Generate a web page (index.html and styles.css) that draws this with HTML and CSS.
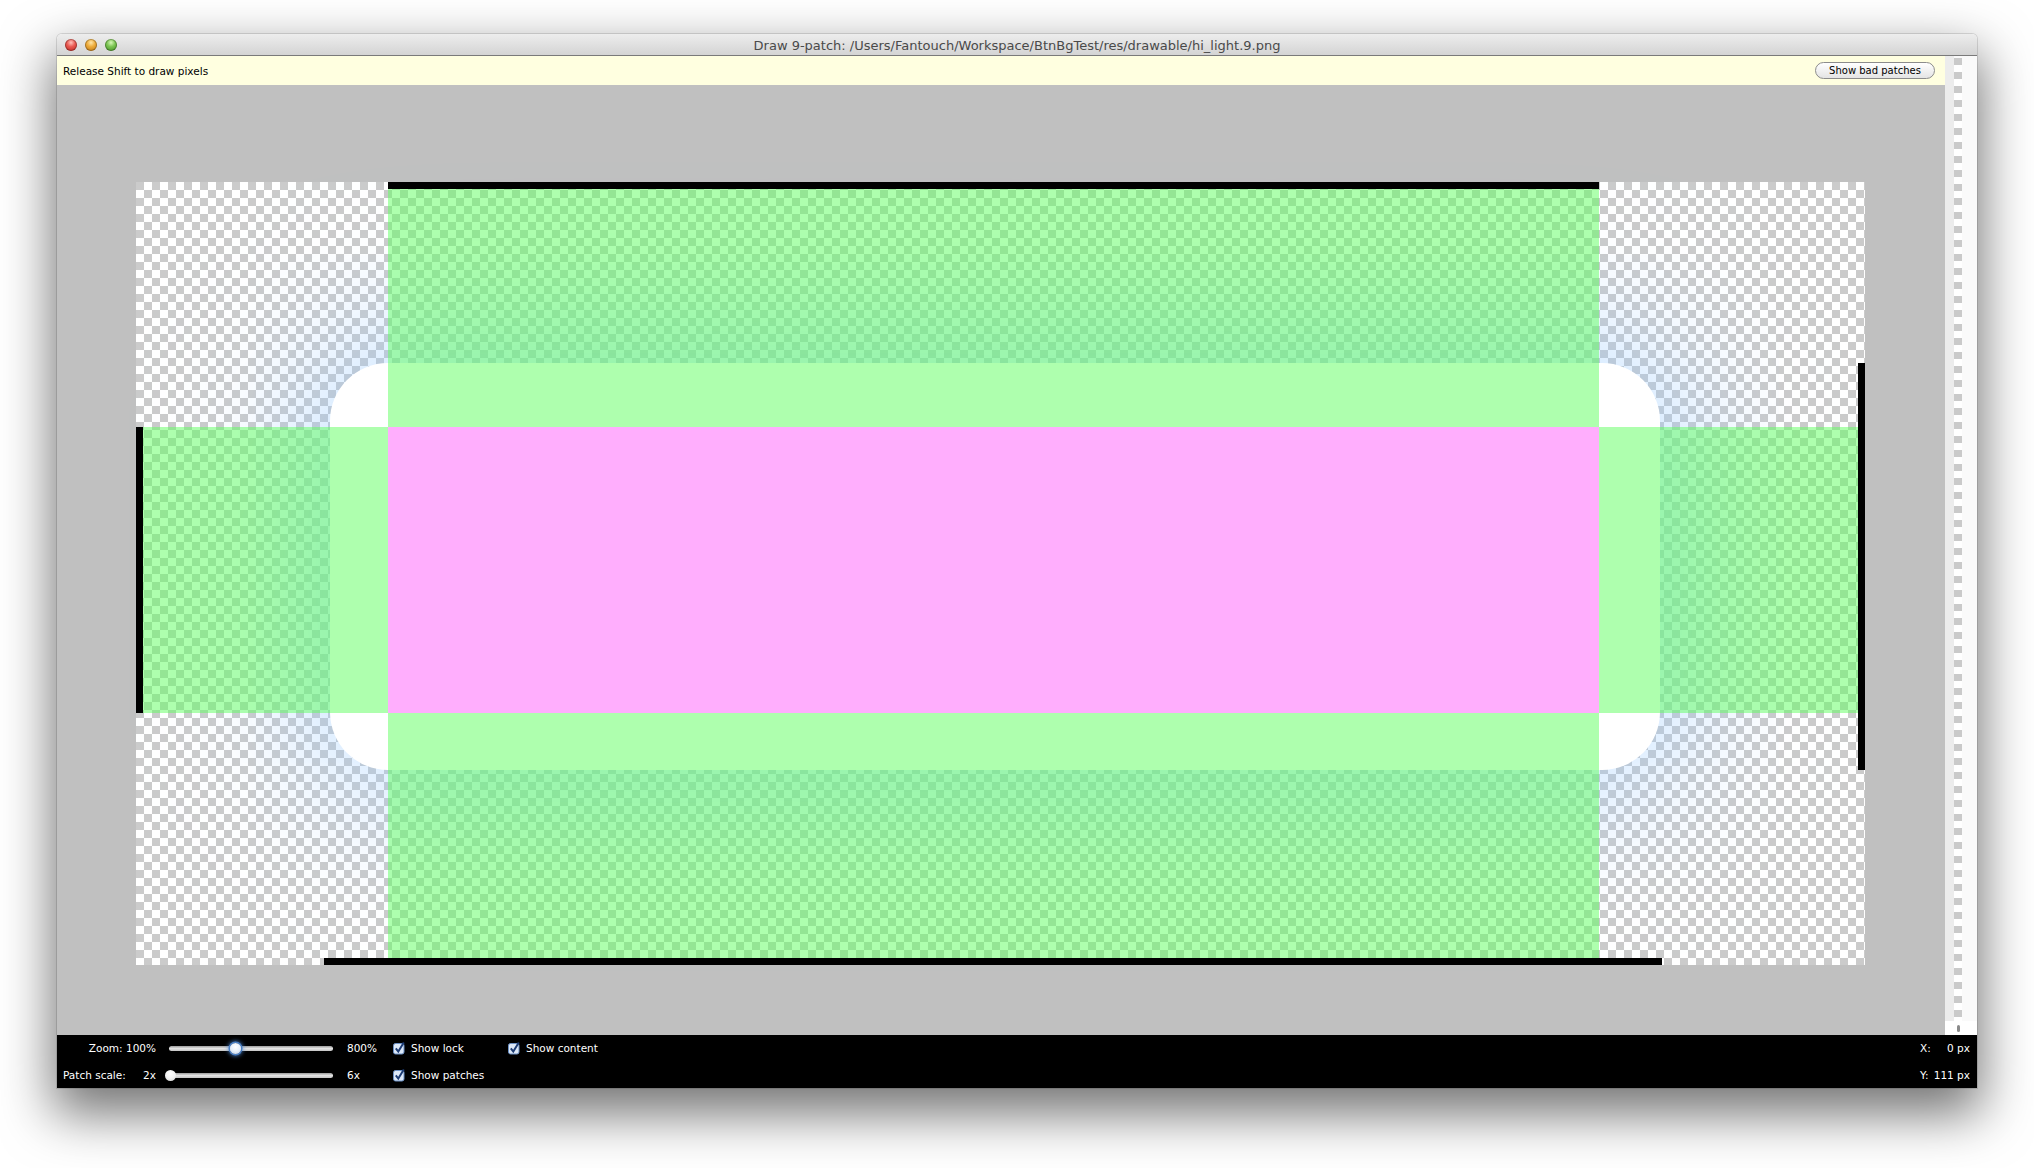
FILE: index.html
```html
<!DOCTYPE html>
<html>
<head>
<meta charset="utf-8">
<title>Draw 9-patch</title>
<link rel="stylesheet" href="styles.css">
</head>
<body>
<div class="window">
  <div class="titlebar">
    <div class="lights">
      <span class="light red"></span>
      <span class="light amber"></span>
      <span class="light green"></span>
    </div>
    <div class="title">Draw 9-patch: /Users/Fantouch/Workspace/BtnBgTest/res/drawable/hi_light.9.png</div>
    <div></div>
  </div>

  <div class="main">
    <div class="editor">
      <div class="helpbar">
        <span>Release Shift to draw pixels</span>
        <button class="pill">Show bad patches</button>
      </div>
      <div class="canvas">
        <div class="ninepatch">
          <div class="img-body"></div>
          <div class="ov-g g-top"></div>
          <div class="ov-g g-bottom"></div>
          <div class="ov-g g-left"></div>
          <div class="ov-g g-right"></div>
          <div class="ov-p p-center"></div>
          <div class="bar bar-top"></div>
          <div class="bar bar-left"></div>
          <div class="bar bar-right"></div>
          <div class="bar bar-bottom"></div>
        </div>
      </div>
    </div>
    <div class="preview">
      <div class="preview-track">
        <div class="pv-a"></div>
        <div class="pv-strip"></div>
        <div class="pv-c"></div>
      </div>
      <div class="preview-foot"><span class="knob"></span></div>
    </div>
  </div>

  <div class="statusbar">
    <div class="sb lbl">Zoom: 100%</div>
    <div class="sb"><div class="slider"><span class="thumb focus" style="left:61px"></span></div></div>
    <div class="sb val">800%</div>
    <div class="sb chk">
      <svg class="cbox" width="13" height="13" viewBox="0 0 13 13"><rect x="0.5" y="1.5" width="10.5" height="10.5" rx="2" fill="#dce8f8" stroke="#6a8fc4"/><path d="M2.8 6.4 L5.3 9.6 L10.8 0.6" fill="none" stroke="#1d3c74" stroke-width="2"/></svg>
      <span>Show lock</span>
    </div>
    <div class="sb chk">
      <svg class="cbox" width="13" height="13" viewBox="0 0 13 13"><rect x="0.5" y="1.5" width="10.5" height="10.5" rx="2" fill="#dce8f8" stroke="#6a8fc4"/><path d="M2.8 6.4 L5.3 9.6 L10.8 0.6" fill="none" stroke="#1d3c74" stroke-width="2"/></svg>
      <span>Show content</span>
    </div>
    <div></div>
    <div class="sb coord"><span>X:</span><span>0 px</span></div>

    <div class="sb lbl2"><span>Patch scale:</span><span>2x</span></div>
    <div class="sb"><div class="slider"><span class="thumb" style="left:-4px"></span></div></div>
    <div class="sb val">6x</div>
    <div class="sb chk">
      <svg class="cbox" width="13" height="13" viewBox="0 0 13 13"><rect x="0.5" y="1.5" width="10.5" height="10.5" rx="2" fill="#dce8f8" stroke="#6a8fc4"/><path d="M2.8 6.4 L5.3 9.6 L10.8 0.6" fill="none" stroke="#1d3c74" stroke-width="2"/></svg>
      <span>Show patches</span>
    </div>
    <div></div>
    <div></div>
    <div class="sb coord"><span>Y:</span><span>111 px</span></div>
  </div>
</div>
</body>
</html>
```

FILE: styles.css
```css
html, body {
  margin: 0;
  padding: 0;
}
body {
  width: 2034px;
  height: 1168px;
  overflow: hidden;
  background: #ffffff;
  font-family: "DejaVu Sans", "Liberation Sans", sans-serif;
}

.window {
  margin: 34px 0 0 57px;
  width: 1920px;
  display: flex;
  flex-direction: column;
  border-radius: 5px 5px 0 0;
  box-shadow: 0 0 0 1px rgba(0,0,0,0.12), 0 22px 52px 4px rgba(0,0,0,0.55);
}

/* title bar */
.titlebar {
  height: 21px;
  border-bottom: 1px solid #7a7a7a;
  border-radius: 5px 5px 0 0;
  background: linear-gradient(#ededed, #d4d4d4);
  display: grid;
  grid-template-columns: 1fr auto 1fr;
  align-items: center;
}
.lights {
  display: flex;
  gap: 8px;
  padding-left: 8px;
}
.light {
  width: 12px;
  height: 12px;
  border-radius: 50%;
  box-shadow: inset 0 0 0 1px rgba(0,0,0,0.25);
}
.red { background: radial-gradient(circle at 50% 30%, #ffc2bb 0, #ea5a52 40%, #b8221c 100%); }
.amber { background: radial-gradient(circle at 50% 30%, #ffe6a8 0, #eeac3a 40%, #b87010 100%); }
.green { background: radial-gradient(circle at 50% 30%, #d6f7b8 0, #7cc552 40%, #3f8a22 100%); }
.title {
  font-size: 13px;
  line-height: 16px;
  padding-top: 3px;
  color: #4a4a4a;
  white-space: nowrap;
}

/* main area */
.main {
  display: flex;
  height: 979px;
}
.editor {
  width: 1888px;
  display: flex;
  flex-direction: column;
}
.helpbar {
  height: 29px;
  background: #ffffe0;
  display: flex;
  align-items: center;
  justify-content: space-between;
  padding: 0 10px 0 6px;
  font-size: 10.5px;
  color: #000;
}
.pill {
  width: 120px;
  height: 17px;
  padding: 0;
  border: 1px solid #8c8c8c;
  border-radius: 9px;
  background: linear-gradient(#ffffff, #e4e4e4);
  font-family: "DejaVu Sans", sans-serif;
  font-size: 10px;
  color: #000;
}
.canvas {
  flex: 1;
  background: #c0c0c0;
  padding: 97px 0 0 79px;
}

/* the nine-patch image */
.ninepatch {
  width: 1729px;
  height: 783px;
  display: grid;
  grid-template-columns: 7px 187px 58px 1211px 61px 198px 7px;
  grid-template-rows: 7px 174px 64px 286px 57px 188px 7px;
  background: repeating-conic-gradient(#ffffff 0 25%, #cbcbcb 0 50%) 0 0 / 16px 16px;
}
.img-body {
  grid-column: 3 / 6;
  grid-row: 3 / 6;
  background: #ffffff;
  border-radius: 58px;
  box-shadow: 0 0 160px 10px rgba(150, 200, 255, 0.75);
}
.ov-g { background: rgba(94, 255, 94, 0.5); }
.ov-p { background: rgba(255, 94, 252, 0.5); }
.g-top { grid-column: 4 / 5; grid-row: 2 / 4; }
.g-bottom { grid-column: 4 / 5; grid-row: 5 / 7; }
.g-left { grid-column: 2 / 4; grid-row: 4 / 5; }
.g-right { grid-column: 5 / 7; grid-row: 4 / 5; }
.p-center { grid-column: 4 / 5; grid-row: 4 / 5; }
.bar { background: #000; }
.bar-top { grid-column: 4 / 5; grid-row: 1 / 2; }
.bar-left { grid-column: 1 / 2; grid-row: 4 / 5; }
.bar-right { grid-column: 7 / 8; grid-row: 3 / 6; }
.bar-bottom { grid-column: 3 / 6; grid-row: 7 / 8; margin: 0 -2px 0 -6px; }

/* preview column on the right */
.preview {
  width: 32px;
  display: flex;
  flex-direction: column;
  background: #fafafa;
}
.preview-track {
  flex: 1;
  display: flex;
}
.pv-a {
  width: 9px;
  background: #ececec;
}
.pv-strip {
  width: 8px;
  margin-top: 2px;
  background: repeating-linear-gradient(#cacaca 0 7px, #ffffff 7px 14px);
}
.pv-c {
  flex: 1;
  background: #fafafa;
}
.preview-foot {
  height: 14px;
  background: #ffffff;
  display: flex;
  align-items: center;
  padding-left: 12px;
}
.knob {
  width: 3px;
  height: 7px;
  border-radius: 2px;
  background: #8a8a8a;
}

/* status bar */
.statusbar {
  height: 53px;
  box-sizing: border-box;
  padding-top: 2px;
  background: #000;
  color: #fff;
  font-size: 10.5px;
  display: grid;
  grid-template-columns: 112px 164px 60px 115px max-content 1fr 57px;
  grid-template-rows: 22px 22px;
  row-gap: 5px;
}
.sb {
  display: flex;
  align-items: center;
  white-space: nowrap;
}
.lbl {
  justify-content: flex-end;
  padding-right: 13px;
}
.lbl2 {
  justify-content: space-between;
  padding: 0 13px 0 6px;
}
.val {
  padding-left: 14px;
}
.chk {
  gap: 5px;
}
.cbox {
  flex: none;
}
.slider {
  position: relative;
  width: 164px;
  height: 5px;
  border-radius: 3px;
  background: linear-gradient(#9a9a9a, #e2e2e2 50%, #c4c4c4);
}
.thumb {
  position: absolute;
  top: -3px;
  width: 11px;
  height: 11px;
  border-radius: 50%;
  background: radial-gradient(circle at 50% 35%, #ffffff 0, #f2f2f2 50%, #cfcfcf 100%);
}
.thumb.focus {
  background: radial-gradient(circle at 50% 35%, #ffffff 0, #e8f0fa 50%, #b9cde8 100%);
  box-shadow: 0 0 0 1.5px #4a7fc4, 0 0 4px 2px rgba(80, 140, 220, 0.8);
}
.coord {
  justify-content: space-between;
  padding-right: 7px;
}
```
